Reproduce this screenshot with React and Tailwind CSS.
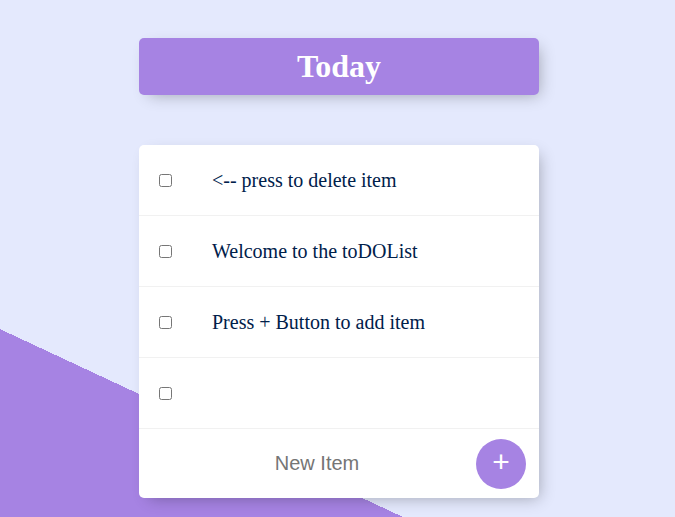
import React from "react";

const items = ["<-- press to delete item", "Welcome to the toDOList", "Press + Button to add item", ""];

export default function App() {
  return (
    <div className="w-full h-[517px] overflow-hidden pl-[3px] bg-[#E4E9FD] bg-[linear-gradient(25deg,#A683E3_50%,#E4E9FD_50%)] bg-[length:100%_973px] bg-no-repeat bg-top font-['Liberation_Serif',serif]">
      <div className="w-[400px] mx-auto mt-[38px] rounded-[5px] bg-[#A683E3] shadow-[5px_5px_15px_-5px_rgba(0,0,0,0.3)]">
        <h1 className="text-white text-[32px] font-bold text-center p-[10px] leading-[37px]">Today</h1>
      </div>
      <div className="w-[400px] mx-auto mt-[50px] rounded-[5px] bg-white shadow-[5px_5px_15px_-5px_rgba(0,0,0,0.3)]">
        {items.map((t, i) => (
          <div key={i} className="min-h-[71px] flex items-center border-b border-[#F1F1F1]">
            <input type="checkbox" className="m-[20px] w-[13px] h-[13px]" />
            <p className="m-0 p-[20px] text-[20px] text-[#00204a] leading-[23px] min-h-[63px]">{t}</p>
          </div>
        ))}
        <div className="h-[69px] flex items-center">
          <input
            type="text"
            placeholder="New Item"
            className="ml-[21px] w-[314px] h-[60px] text-center bg-transparent border-0 outline-none text-[20px] font-['Liberation_Sans',sans-serif] placeholder:text-[#757575]"
          />
          <button className="ml-[2px] w-[50px] h-[50px] rounded-full bg-[#A683E3] text-white text-[30px] pb-[3px] flex items-center justify-center font-['Liberation_Sans',sans-serif] leading-none">
            +
          </button>
        </div>
      </div>
    </div>
  );
}
